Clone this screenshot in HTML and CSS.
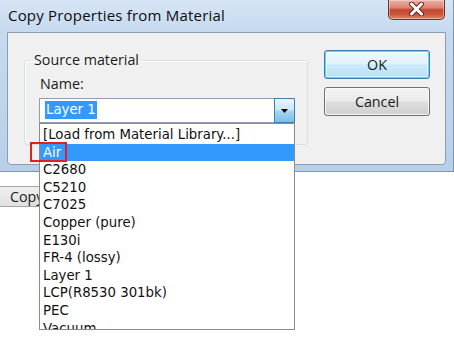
FILE: index.html
```html
<!DOCTYPE html>
<html>
<head>
<meta charset="utf-8">
<title>Copy Properties from Material</title>
<link rel="stylesheet" href="styles.css">
</head>
<body>
<div class="page">
  <div class="window">
    <div class="titlebar">
      <div class="title">Copy Properties from Material</div>
      <div class="close">
        <svg width="17" height="14" viewBox="0 0 17 14">
          <path d="M3.5 2 L13.5 12 M13.5 2 L3.5 12" stroke="#5a231c" stroke-width="4.8" stroke-linecap="round" fill="none"/>
          <path d="M3.5 2 L13.5 12 M13.5 2 L3.5 12" stroke="#ffffff" stroke-width="3" stroke-linecap="round" fill="none"/>
        </svg>
      </div>
    </div>
    <div class="client">
      <fieldset class="group">
        <legend>Source material</legend>
        <div class="label">Name:</div>
        <div class="combo">
          <div class="combo-field"><span class="sel">Layer 1</span></div>
          <div class="combo-btn">
            <svg width="8" height="5" viewBox="0 0 8 5"><polygon points="0,0 7,0 3.5,4" fill="#000"/></svg>
          </div>
          <ul class="list">
            <li>[Load from Material Library...]</li>
            <li class="hl">Air</li>
            <li>C2680</li>
            <li>C5210</li>
            <li>C7025</li>
            <li>Copper (pure)</li>
            <li>E130i</li>
            <li>FR-4 (lossy)</li>
            <li>Layer 1</li>
            <li>LCP(R8530 301bk)</li>
            <li>PEC</li>
            <li>Vacuum</li>
          </ul>
          <div class="mark"></div>
        </div>
      </fieldset>
      <div class="buttons">
        <div class="btn default">OK</div>
        <div class="btn">Cancel</div>
      </div>
    </div>
  </div>
  <div class="behind">
    <div class="copy-btn">Copy</div>
  </div>
</div>
</body>
</html>
```
FILE: styles.css
```css
* { box-sizing: border-box; }
html, body { margin: 0; padding: 0; }
body {
  width: 454px;
  height: 337px;
  overflow: hidden;
  background: #ffffff;
  font-family: "Open Sans", "Noto Sans", sans-serif;
  color: #000;
}
.page { width: 454px; height: 337px; }

.window {
  width: 454px;
  height: 172px;
  display: flex;
  flex-direction: column;
  padding: 0 7px 6px 7px;
  background: linear-gradient(180deg, #d6e5f5 0%, #c6daef 18%, #bfd5ec 60%, #b7cfe9 100%);
  border-right: 1px solid #7f95ad;
  border-bottom: 1px solid #7f95ad;
}
.titlebar {
  height: 32px;
  flex: none;
  display: flex;
  align-items: flex-start;
  padding-left: 1px;
}
.title {
  padding-top: 5px;
  font-size: 15px;
  letter-spacing: 0.2px;
  line-height: 20px;
  color: #0d0d0d;
}
.close {
  margin-left: auto;
  margin-right: 1px;
  width: 57px;
  height: 20px;
  border: 1px solid #7a2e24;
  border-top: none;
  border-radius: 0 0 5px 5px;
  background: linear-gradient(180deg, #eab0a3 0%, #db8474 40%, #c5482f 52%, #c9553b 75%, #de8a68 100%);
  box-shadow: inset 0 0 0 1px rgba(255,255,255,0.35);
  display: flex;
  align-items: center;
  justify-content: center;
  padding-bottom: 1px;
}

.client {
  flex: 1;
  display: flex;
  align-items: flex-start;
  padding: 17px 15px 0 16px;
  background: #f0f0f0;
  border: 1px solid #8c9db3;
  border-radius: 0 0 4px 4px;
}

.group {
  margin: 1px 0 0 0;
  width: 284px;
  min-width: 0;
  padding: 0 0 21px 6px;
  border: 1px solid #d5dfe5;
  border-radius: 3px;
  box-shadow: inset 1px 1px 0 #ffffff;
}
.group legend {
  padding: 0 3px;
  font-size: 14.3px;
  line-height: 18px;
  color: #1a1a1a;
}
.label {
  margin: 6px 0 0 9px;
  font-size: 14.3px;
  line-height: 18px;
  color: #1a1a1a;
}
.combo {
  position: relative;
  margin: 5px 0 0 8px;
  width: 256px;
  height: 25px;
  display: flex;
  border: 1px solid #8e9db5;
  background: #ffffff;
  font-family: "DejaVu Sans", sans-serif;
  font-size: 13.3px;
}
.combo-field {
  flex: 1;
  padding: 2px 0 0 5px;
}
.sel {
  display: inline-block;
  padding: 0 1px;
  line-height: 18px;
  background: #3399ff;
  color: #ffffff;
}
.combo-btn {
  width: 21px;
  margin: -1px -1px -1px 0;
  border: 1px solid #3c7fb1;
  border-radius: 0 2px 2px 0;
  background: linear-gradient(180deg, #e8f5fd 0%, #cde9f8 45%, #a4d4ef 55%, #7fbfe3 100%);
  display: flex;
  align-items: center;
  justify-content: center;
  padding-top: 2px;
}

.list {
  position: absolute;
  z-index: 10;
  top: 24px;
  left: -1px;
  width: 256px;
  height: 207px;
  margin: 0;
  padding: 2px 0 0 0;
  list-style: none;
  overflow: hidden;
  background: #ffffff;
  border: 1px solid #8c8c8c;
}
.list li {
  height: 17.6px;
  line-height: 17.6px;
  padding-left: 3px;
  white-space: nowrap;
  color: #111;
}
.list li.hl {
  background: #3399ff;
  color: #ffffff;
}
.mark {
  position: absolute;
  z-index: 11;
  left: -10px;
  top: 43px;
  width: 37px;
  height: 20px;
  border: 2px solid #e3201e;
}

.buttons {
  margin-left: 16px;
  width: 106px;
  display: flex;
  flex-direction: column;
  gap: 8px;
}
.btn {
  height: 29px;
  border: 1px solid #707070;
  border-radius: 3px;
  background: linear-gradient(180deg, #f4f4f4 0%, #ebebeb 48%, #dddddd 52%, #cfcfcf 100%);
  box-shadow: inset 0 0 0 1px rgba(255,255,255,0.75);
  text-align: center;
  font-size: 14.3px;
  line-height: 27px;
  color: #1a1a1a;
}
.btn.default {
  border-color: #3c7fb1;
  background: linear-gradient(180deg, #eef8fe 0%, #e0f2fc 48%, #cbebfb 52%, #b5e0f6 100%);
  box-shadow: inset 0 0 0 1px #5fd3fb, inset 0 0 0 2px rgba(255,255,255,0.5);
}

.behind {
  padding-top: 14px;
}
.copy-btn {
  margin-left: -1px;
  width: 80px;
  height: 21px;
  border: 1px solid #a5a5a5;
  background: linear-gradient(180deg, #f0f0f0 0%, #e0e0e0 100%);
  padding-left: 10px;
  font-size: 14.3px;
  line-height: 19px;
  color: #1a1a1a;
}
```
